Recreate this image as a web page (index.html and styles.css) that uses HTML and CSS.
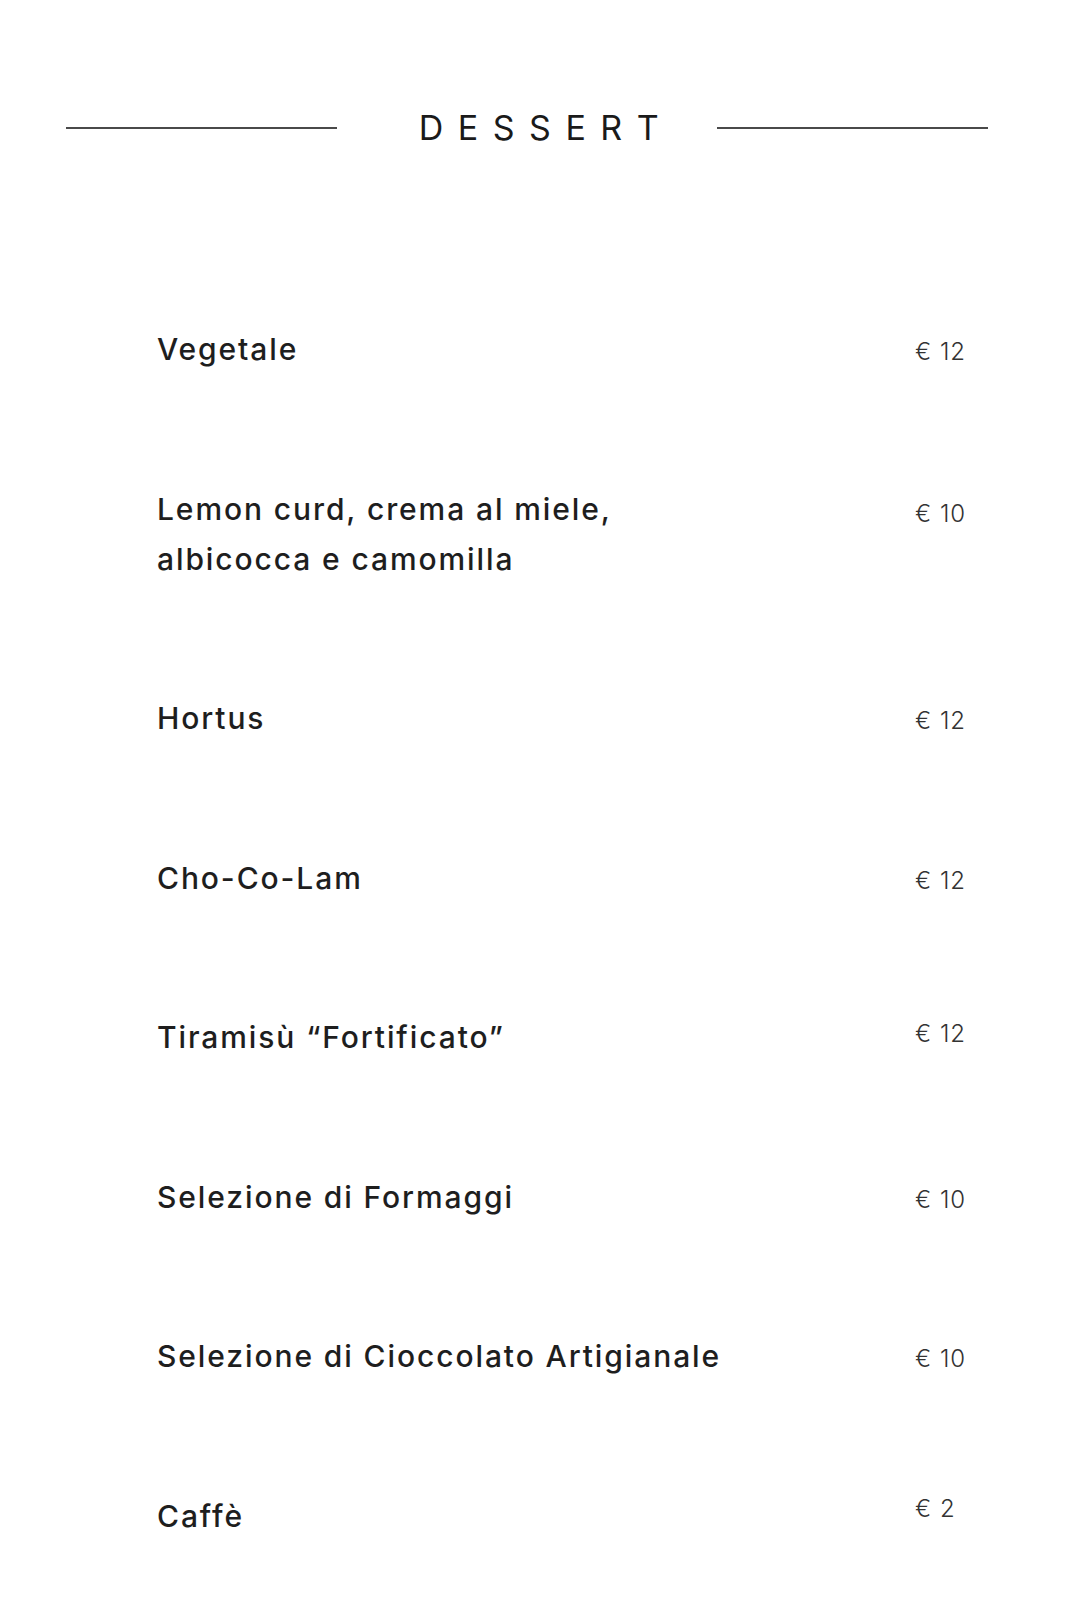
FILE: index.html
```html
<!DOCTYPE html>
<html lang="it">
<head>
<meta charset="utf-8">
<title>Dessert</title>
<link rel="stylesheet" href="styles.css">
</head>
<body>
<header class="menu-header">
  <span class="rule"></span>
  <h1 class="menu-title">DESSERT</h1>
  <span class="rule"></span>
</header>
<main class="menu-list">
  <div class="item"><div class="name">Vegetale</div><div class="price">€ 12</div></div>
  <div class="item"><div class="name">Lemon curd, crema al miele,<br>albicocca e camomilla</div><div class="price price--low">€ 10</div></div>
  <div class="item"><div class="name">Hortus</div><div class="price">€ 12</div></div>
  <div class="item"><div class="name">Cho-Co-Lam</div><div class="price">€ 12</div></div>
  <div class="item"><div class="name">Tiramisù “Fortificato”</div><div class="price price--high">€ 12</div></div>
  <div class="item"><div class="name">Selezione di Formaggi</div><div class="price">€ 10</div></div>
  <div class="item"><div class="name">Selezione di Cioccolato Artigianale</div><div class="price">€ 10</div></div>
  <div class="item"><div class="name">Caffè</div><div class="price price--top">€ 2</div></div>
</main>
</body>
</html>
```
FILE: styles.css
```css
html, body {
  margin: 0;
  padding: 0;
  background: #ffffff;
}
body {
  width: 1080px;
  font-family: Inter, "Noto Sans", sans-serif;
  color: #1e1e1e;
}
.menu-header {
  display: flex;
  align-items: center;
  height: 60px;
  padding: 98px 92px 0 66px;
}
.rule {
  flex: 1;
  height: 2px;
  background: #4a4a4a;
}
.menu-title {
  margin: 0 44px 0 82px;
  font-size: 34px;
  font-weight: 400;
  letter-spacing: 14.5px;
  line-height: 60px;
  color: #1a1a1a;
}
.menu-list {
  display: flex;
  flex-direction: column;
  gap: 109.5px;
  padding: 166px 0 0 157px;
}
.item {
  display: flex;
  align-items: flex-start;
}
.name {
  width: 758px;
  font-size: 30px;
  line-height: 50px;
  letter-spacing: 1.9px;
  font-weight: 500;
}
.price {
  padding-top: 13px;
  font-size: 24px;
  line-height: 30px;
  font-weight: 300;
  letter-spacing: 1px;
  color: #333333;
}
.price--low { padding-top: 15px; }
.price--high { padding-top: 7px; }
.price--top { padding-top: 3px; }
```
